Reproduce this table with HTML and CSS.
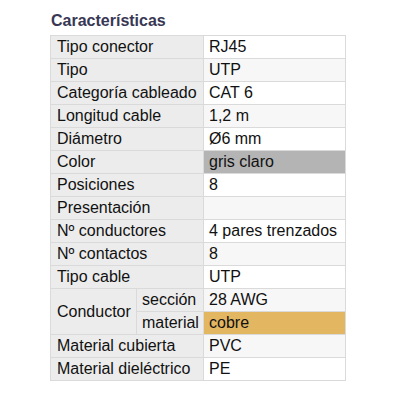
FILE: index.html
```html
<!DOCTYPE html>
<html>
<head>
<meta charset="utf-8">
<link rel="stylesheet" href="styles.css">
</head>
<body>
<div class="wrap">
  <h2 class="title">Características</h2>
  <table class="specs">
    <colgroup><col class="c1"><col class="c2"><col class="c3"></colgroup>
    <tr><td class="lab" colspan="2">Tipo conector</td><td class="val">RJ45</td></tr>
    <tr class="alt"><td class="lab" colspan="2">Tipo</td><td class="val">UTP</td></tr>
    <tr><td class="lab" colspan="2">Categoría cableado</td><td class="val">CAT 6</td></tr>
    <tr class="alt"><td class="lab" colspan="2">Longitud cable</td><td class="val">1,2 m</td></tr>
    <tr><td class="lab" colspan="2">Diámetro</td><td class="val">Ø6 mm</td></tr>
    <tr class="alt"><td class="lab" colspan="2">Color</td><td class="val gray">gris claro</td></tr>
    <tr><td class="lab" colspan="2">Posiciones</td><td class="val">8</td></tr>
    <tr class="alt"><td class="lab" colspan="2">Presentación</td><td class="val"></td></tr>
    <tr><td class="lab" colspan="2">Nº conductores</td><td class="val">4 pares trenzados</td></tr>
    <tr class="alt"><td class="lab" colspan="2">Nº contactos</td><td class="val">8</td></tr>
    <tr><td class="lab" colspan="2">Tipo cable</td><td class="val">UTP</td></tr>
    <tr class="alt"><td class="lab" rowspan="2">Conductor</td><td class="lab sub">sección</td><td class="val">28 AWG</td></tr>
    <tr><td class="lab sub">material</td><td class="val copper">cobre</td></tr>
    <tr class="alt"><td class="lab" colspan="2">Material cubierta</td><td class="val">PVC</td></tr>
    <tr><td class="lab" colspan="2">Material dieléctrico</td><td class="val">PE</td></tr>
  </table>
</div>
</body>
</html>
```
FILE: styles.css
```css
html, body {
  margin: 0;
  padding: 0;
  background: #fff;
}
.wrap {
  padding: 12px 0 0 50px;
  font-family: "Liberation Sans", Arial, sans-serif;
}
.title {
  margin: 0 0 5px 1px;
  font-size: 16px;
  line-height: 18px;
  font-weight: bold;
  color: #383855;
}
.specs {
  border-collapse: collapse;
  table-layout: fixed;
  width: 295px;
  font-size: 16px;
  color: #111;
}
.c1 { width: 86px; }
.c2 { width: 67px; }
.c3 { width: 142px; }
.specs td {
  border: 1px solid #dadada;
  height: 22px;
  padding: 0 3px 0 6px;
  line-height: 22px;
  white-space: nowrap;
  overflow: hidden;
  box-sizing: border-box;
}
.specs td.lab {
  background: #ececec;
}
.specs td.lab.sub {
  padding-left: 5px;
}
.specs td.val {
  background: #ffffff;
  padding-left: 5px;
}
.specs tr.alt td.val {
  background: #f7f7f7;
}
.specs tr td.val.gray {
  background: #b4b4b4;
}
.specs tr td.val.copper {
  background: #e3b762;
}
```
